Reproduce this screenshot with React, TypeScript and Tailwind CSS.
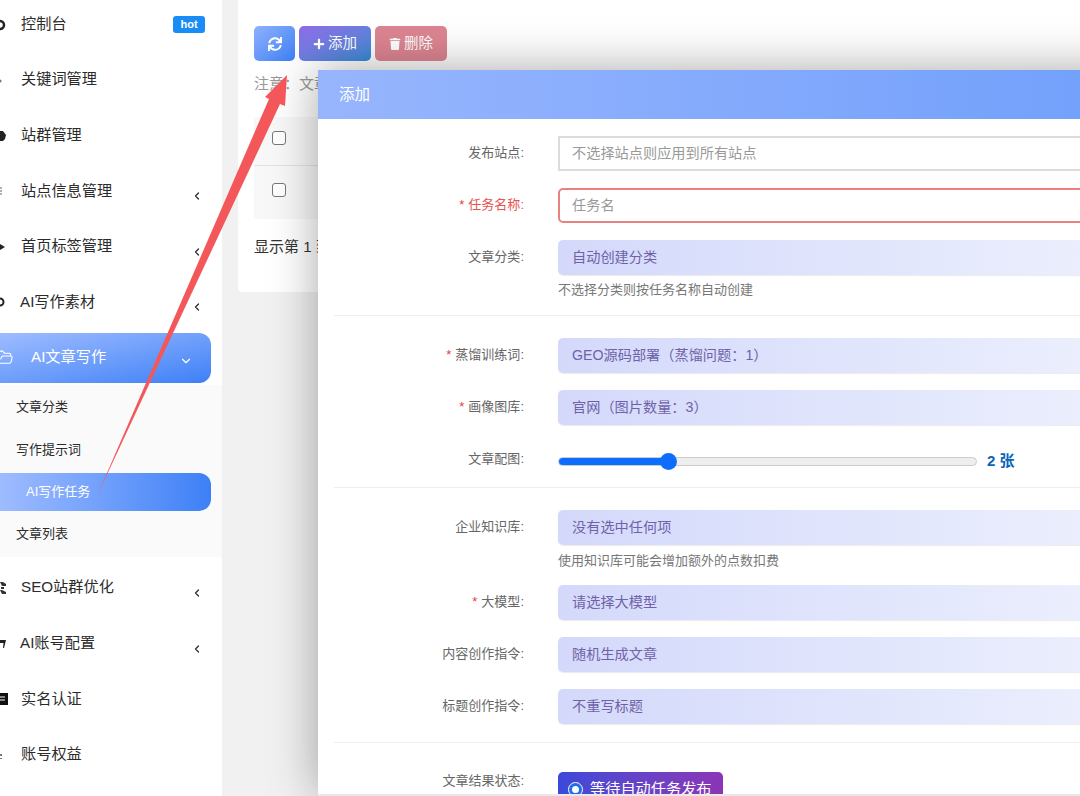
import type { ReactNode } from "react";
import { ChevronDown, ChevronLeft, FolderOpen } from "lucide-react";
import { FaPlus, FaSync, FaTrash } from "react-icons/fa";

type MenuItem = { label: string; hot?: boolean; arrow?: boolean; ai?: boolean; icon: ReactNode };

// the menu icons are almost entirely cut off by the window edge, only slivers show
const topMenu: MenuItem[] = [
  { label: "控制台", hot: true, icon: <circle cx="0" cy="8" r="4" fill="none" stroke="#222" strokeWidth="2.5" /> },
  { label: "关键词管理", icon: <circle cx="0" cy="9" r="1.6" fill="#778" /> },
  { label: "站群管理", icon: <path d="M0 3 L3 3 L6 7 L5 11 L3 13 L0 13 Z" fill="#222" /> },
  { label: "站点信息管理", arrow: true, icon: <path d="M0 5 H2 M0 8 H2 M0 11 H2" stroke="#8a9ab0" strokeWidth="1.5" /> },
  { label: "首页标签管理", arrow: true, icon: <path d="M0 5 L5 8 L0 11 Z" fill="#222" /> },
  { label: "AI写作素材", arrow: true, ai: true, icon: <circle cx="0" cy="8" r="3.5" fill="none" stroke="#222" strokeWidth="2" /> },
];

const bottomMenu: MenuItem[] = [
  {
    label: "SEO站群优化",
    arrow: true,
    icon: <path d="M0 2 H3 L6 4 V6 H2 Z M1 7 H4 V9 H1 Z M0 10 H2 L6 12 V14 H2 Z" fill="#333" />,
  },
  { label: "AI账号配置", arrow: true, ai: true, icon: <path d="M0 4 H6 L4 12 H3 L3.5 7 H0 Z" fill="#222" /> },
  {
    label: "实名认证",
    icon: (
      <>
        <rect x="0" y="2" width="8" height="12" fill="#111" />
        <path d="M0 6 H5 M0 9 H5" stroke="#fff" strokeWidth="1" />
      </>
    ),
  },
  { label: "账号权益", icon: <path d="M0 7 H2 V9 H0 Z M0 11 H2 V12 H0 Z" fill="#778" /> },
];

function SideItem({ item }: { item: MenuItem }) {
  return (
    <div className="relative flex h-[55.6px] items-center pr-[17px] text-[15.2px] text-[#2b2b2b]">
      <svg className="absolute left-0 top-[20px] h-[16px] w-[10px]" viewBox="0 0 10 16">
        {item.icon}
      </svg>
      <span className={item.ai ? "ml-[20px]" : "ml-[21px]"}>{item.label}</span>
      {item.hot && (
        <span className="ml-auto flex h-[17px] w-[32px] items-center justify-center rounded-[3px] bg-[#1a8cf5] text-[11px] font-bold text-white">
          hot
        </span>
      )}
      {item.arrow && <ChevronLeft className="absolute left-[191px] top-[27px] h-[12px] w-[12px]" strokeWidth={2.5} />}
    </div>
  );
}

function FormRow({ label, required, children }: { label: string; required?: boolean; children: ReactNode }) {
  return (
    <div className="flex h-[35px] items-center">
      <label className="w-[190px] pb-[2px] text-right text-[13px] text-[#666]">
        {required && <span className="mr-[4px] text-[#e53e3e]">*</span>}
        {label}:
      </label>
      <div className="ml-[34px] flex-1">{children}</div>
    </div>
  );
}

function Select({ text }: { text: string }) {
  return (
    <div className="flex h-[35px] items-center rounded-[5px] bg-gradient-to-r from-[#d4d9fb] to-[#f0f3fd] pl-[14px] text-[14.2px] text-[#6f62a8] shadow-[0_1px_1px_rgba(0,0,0,0.08)]">
      {text}
    </div>
  );
}

export default function App() {
  return (
    <div className="relative flex h-[796px] w-[1080px] overflow-hidden bg-[#f1f1f1] [font-family:'Liberation_Sans','Noto_Sans_CJK_SC',sans-serif]">
      {/* Sidebar */}
      <aside className="h-full w-[222px] shrink-0 bg-white">
        <div className="-mt-[3.5px]">
          {topMenu.map((item) => (
            <SideItem key={item.label} item={item} />
          ))}
        </div>
        <div className="-ml-[20px] mr-[11px] mt-[2.5px] flex h-[50px] items-center rounded-r-[12px] bg-gradient-to-br from-[#a3beff] to-[#3c80f6] text-[15.2px] text-white">
          <FolderOpen className="ml-[16px] h-[17px] w-[18px]" strokeWidth={1.5} />
          <span className="ml-[17px]">AI文章写作</span>
          <ChevronDown className="ml-auto mr-[18px] mt-[6px] h-[14px] w-[14px]" />
        </div>
        <div className="mt-[2px] bg-[#fafafa] pb-[1.5px] pt-[1px] text-[13px] text-[#2b2b2b]">
          <div className="flex h-[43px] items-center pl-[16px]">文章分类</div>
          <div className="flex h-[43px] items-center pl-[16px]">写作提示词</div>
          <div className="flex h-[41px] items-center">
            <div className="-ml-[10px] mr-[11px] flex h-[38px] flex-1 items-center rounded-r-[12px] bg-gradient-to-r from-[#a3beff] to-[#3c80f6] pl-[36px] text-white">
              AI写作任务
            </div>
          </div>
          <div className="flex h-[43px] items-center pl-[16px]">文章列表</div>
        </div>
        <div className="pt-[3px]">
          {bottomMenu.map((item) => (
            <SideItem key={item.label} item={item} />
          ))}
        </div>
      </aside>

      {/* Page content under the modal */}
      <main className="ml-[16px] h-[292px] flex-1 rounded-b-[4px] bg-white pl-[16px] pt-[26px]">
        <div className="flex gap-[4px] text-[14.5px] text-white">
          <button className="flex h-[35px] w-[41px] items-center justify-center rounded-[5px] bg-gradient-to-br from-[#8fb0fb] to-[#3c80f6]">
            <FaSync className="h-[14px] w-[14px]" />
          </button>
          <button className="flex h-[35px] w-[72px] items-center justify-center gap-[3px] rounded-[5px] bg-gradient-to-br from-[#8f6be8] to-[#2f8fd8]">
            <FaPlus className="h-[12px] w-[12px]" />
            添加
          </button>
          <button className="flex h-[35px] w-[72px] items-center justify-center gap-[3px] rounded-[5px] bg-[#dd8592]">
            <FaTrash className="h-[12px] w-[12px]" />
            删除
          </button>
        </div>
        <p className="mt-[12px] text-[15px] text-[#999]">注意：文章</p>
        <div className="mt-[21px] bg-[#f8f8f8]">
          <div className="flex h-[49px] items-center border-b border-[#e3e3e3] pb-[5px] pl-[18px]">
            <span className="h-[14px] w-[14px] rounded-[3px] border border-[#777] bg-white" />
          </div>
          <div className="flex h-[53px] items-center pb-[5px] pl-[18px]">
            <span className="h-[14px] w-[14px] rounded-[3px] border border-[#777] bg-white" />
          </div>
        </div>
        <p className="mt-[17px] text-[15px] text-[#333]">显示第 1 到</p>
      </main>

      {/* Modal */}
      <section className="absolute left-[318px] top-[70px] h-[724px] w-[900px] bg-white shadow-[0_0_45px_rgba(0,0,0,0.35)]">
        <header className="flex h-[49px] items-center bg-gradient-to-r from-[#97b5fd] to-[#6d9dfb] pl-[21px] text-[15.5px] text-white">
          添加
        </header>
        <div className="mx-[16px]">
          <div className="flex flex-col gap-[17px] border-b border-[#eee] pb-[15px] pt-[17px]">
            <FormRow label="发布站点">
              <div className="flex h-[35px] items-center border-2 border-[#dcdcdc] pl-[12px] text-[14.2px] text-[#999]">
                不选择站点则应用到所有站点
              </div>
            </FormRow>
            <div className="[&_label]:text-[#e55353]">
              <FormRow label="任务名称" required>
                <div className="flex h-[35px] items-center rounded-[5px] border-2 border-[#e8817f] pl-[12px] text-[14.2px] text-[#999]">
                  任务名
                </div>
              </FormRow>
            </div>
            <div>
              <FormRow label="文章分类">
                <Select text="自动创建分类" />
              </FormRow>
              <p className="ml-[224px] mt-[5px] h-[20px] text-[13px] leading-[20px] text-[#777]">不选择分类则按任务名称自动创建</p>
            </div>
          </div>
          <div className="flex flex-col gap-[17px] border-b border-[#eee] pb-[10px] pt-[22px]">
            <FormRow label="蒸馏训练词" required>
              <Select text="GEO源码部署（蒸馏问题：1）" />
            </FormRow>
            <FormRow label="画像图库" required>
              <Select text="官网（图片数量：3）" />
            </FormRow>
            <FormRow label="文章配图">
              <div className="flex items-center pt-[3px]">
                <div className="relative h-[9px] w-[419px] rounded-full border border-[#ccc] bg-[#eee]">
                  <div className="h-full w-[110px] rounded-full bg-[#0d6efd]" />
                  <span className="absolute left-[101px] top-[-5px] h-[17px] w-[17px] rounded-full bg-[#0d6efd]" />
                </div>
                <span className="ml-[10px] text-[15px] font-bold text-[#0b64b5]">2 张</span>
              </div>
            </FormRow>
          </div>
          <div className="border-b border-[#eee] pb-[18px] pt-[22px]">
            <FormRow label="企业知识库">
              <Select text="没有选中任何项" />
            </FormRow>
            <p className="ml-[224px] mt-[6px] h-[20px] text-[13px] leading-[20px] text-[#777]">使用知识库可能会增加额外的点数扣费</p>
            <div className="mt-[14px] flex flex-col gap-[17px]">
              <FormRow label="大模型" required>
                <Select text="请选择大模型" />
              </FormRow>
              <FormRow label="内容创作指令">
                <Select text="随机生成文章" />
              </FormRow>
              <FormRow label="标题创作指令">
                <Select text="不重写标题" />
              </FormRow>
            </div>
          </div>
          <div className="flex items-start pt-[29px]">
            <label className="w-[190px] text-right text-[13px] leading-[18px] text-[#666]">文章结果状态:</label>
            <div className="ml-[34px] flex h-[35px] w-[165px] items-center gap-[8px] rounded-[5px] bg-gradient-to-r from-[#3a49d8] to-[#8a35b5] pl-[11px] text-[15.2px] text-white">
              <span className="h-[13px] w-[13px] rounded-full border-[3px] border-[#1f6fe8] bg-white outline outline-1 outline-white" />
              等待自动任务发布
            </div>
          </div>
        </div>
      </section>
      <div className="absolute bottom-0 left-[318px] right-0 h-[2px] bg-[#e9e9e9]" />

      {/* Red annotation arrow */}
      <svg className="pointer-events-none absolute inset-0 h-full w-full" viewBox="0 0 1080 796">
        <polygon points="287,75 265,97 269,99 97,496 280,104 285,106" fill="#f4575a" />
      </svg>
    </div>
  );
}
